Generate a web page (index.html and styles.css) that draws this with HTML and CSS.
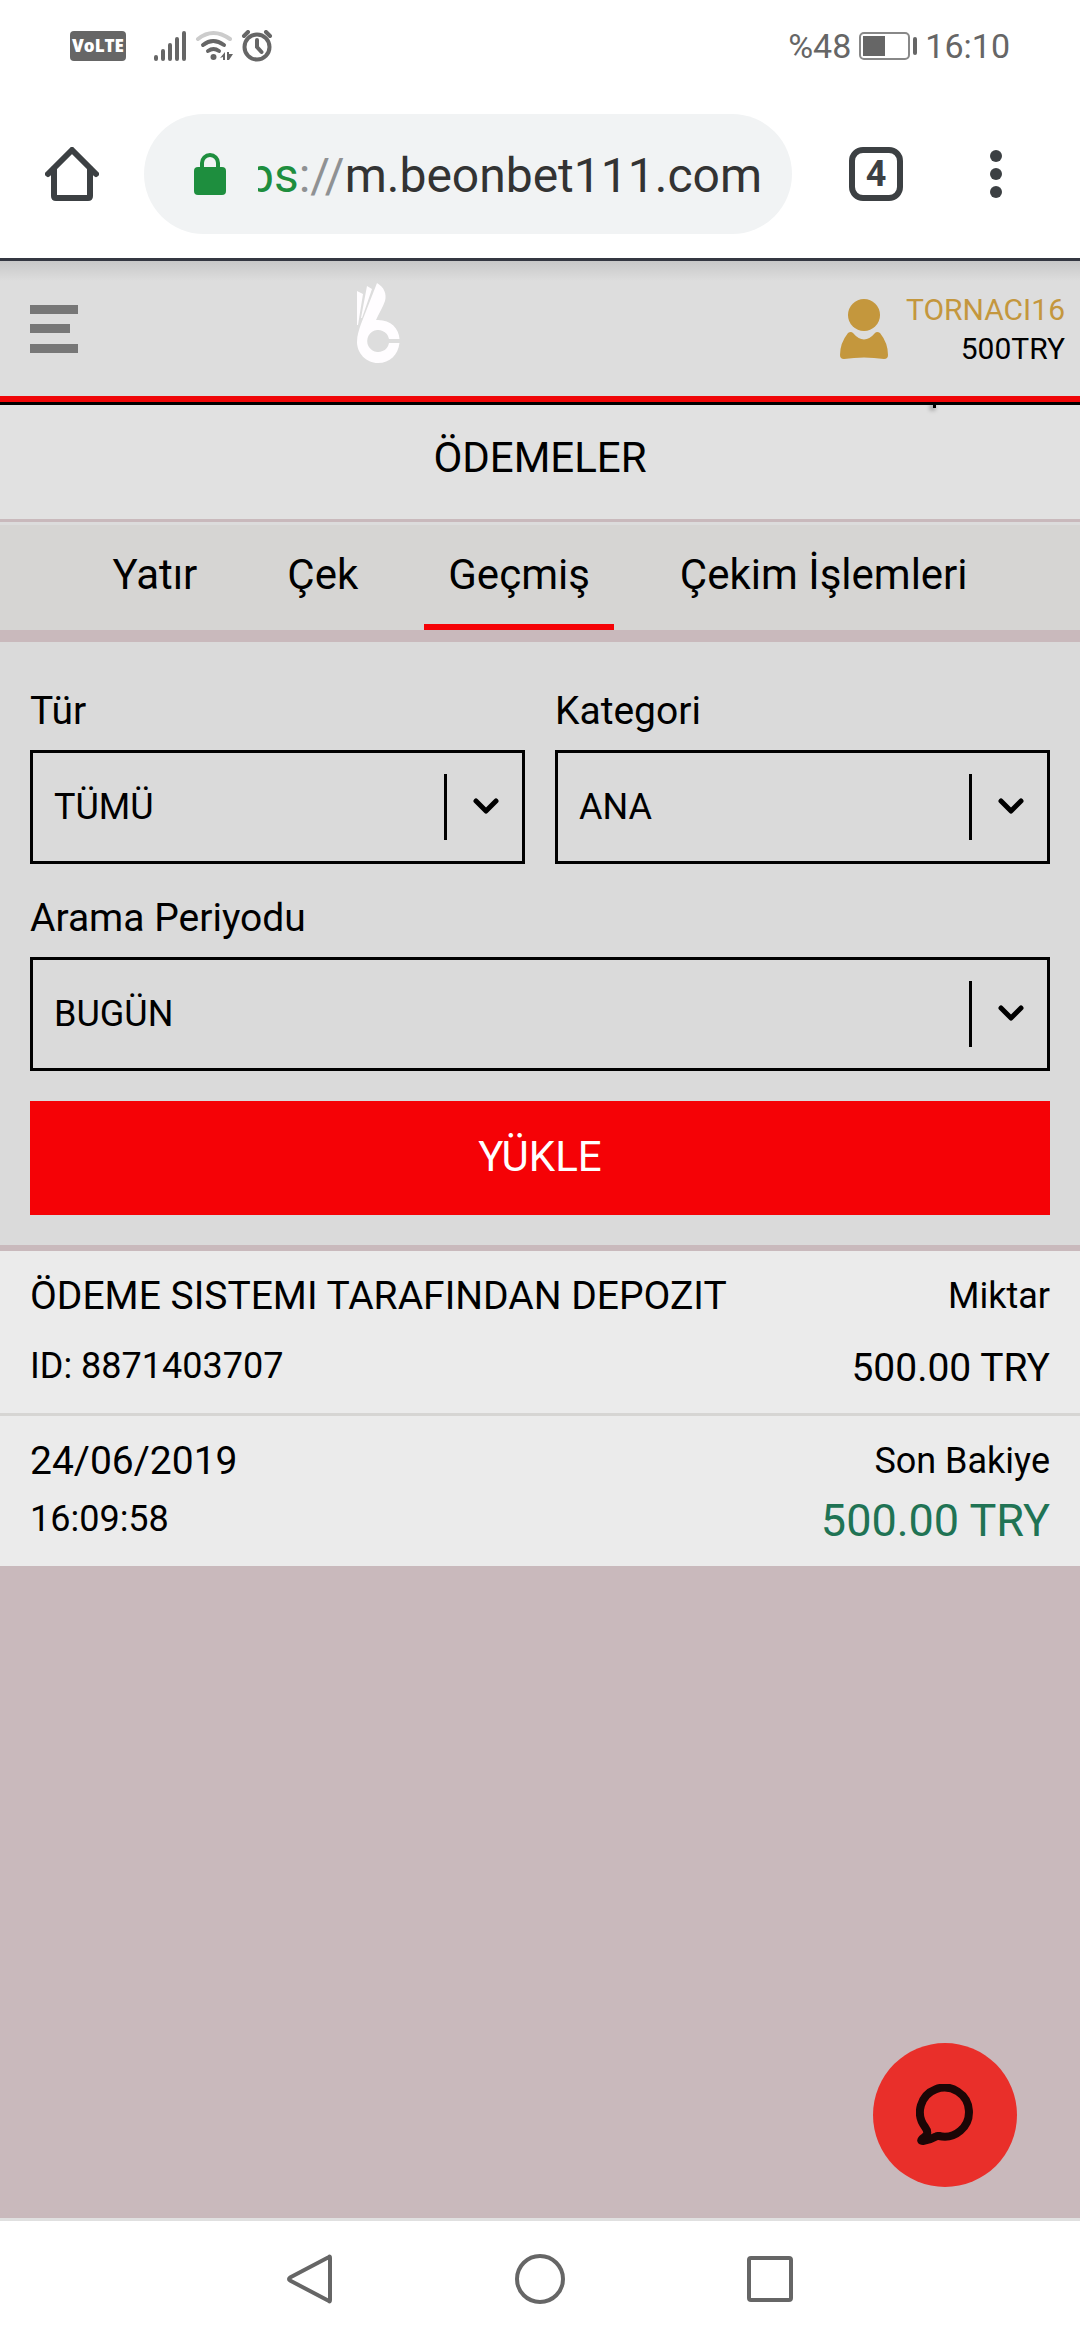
FILE: index.html
```html
<!DOCTYPE html>
<html lang="tr">
<head>
<meta charset="utf-8">
<meta name="viewport" content="width=device-width, initial-scale=1">
<title>Ödemeler</title>
<link rel="stylesheet" href="styles.css">
</head>
<body>
<div class="screen">
  <div class="status">
    <div class="status-left">
      <span class="volte">VoLTE</span>
      <svg class="signal" width="34" height="32" viewBox="0 0 34 32" stroke="#666" stroke-width="4" stroke-linecap="round"><path d="M3 27v2M10 21v8M17 15v14M24 9v20M31 3v26"/></svg>
      <svg class="wifi" width="38" height="32" viewBox="0 0 38 32" fill="none" stroke-linecap="round" stroke-width="4"><path d="M3 9q15-12 32 0" stroke="#ccc"/><path d="M8 15q10-8 21 0M13 21q5.500-4 11 0" stroke="#666"/><circle cx="18.500" cy="27" r="3" fill="#666" stroke="none"/><path d="M25 28l5-6v8h-2v-3zM32 22h2v2l4 0-4 6h-2z" fill="#666" stroke="none"/></svg>
      <svg class="alarm" width="32" height="32" viewBox="0 0 32 32" fill="none" stroke="#666" stroke-linecap="round" stroke-width="4"><circle cx="16" cy="17" r="12.500"/><path d="M16 10v7l4.500 5M3 6l4-4M29 6l-4-4"/></svg>
    </div>
    <div class="status-right">
      <span>%48</span>
      <svg class="battery" width="58" height="28" viewBox="0 0 58 28"><rect x="1" y="1" width="49" height="26" rx="4" fill="none" stroke="#888" stroke-width="2"/><path fill="#666" d="M4 4h22v20H4z"/><rect x="54" y="5" width="4" height="18" rx="2" fill="#666"/></svg>
      <span>16:10</span>
    </div>
  </div>

  <div class="browser">
    <button class="icon-button" aria-label="Ana sayfa">
      <svg width="54" height="54" viewBox="0 0 54 54" fill="none" stroke="#3c4043" stroke-width="6" stroke-linejoin="round" stroke-linecap="round"><path d="M3 27L27 3l24 24"/><path d="M9 22v27q0 2 2 2h32q2 0 2-2V22"/></svg>
    </button>
    <button class="address">
      <svg width="32" height="42" viewBox="0 0 32 42"><rect y="14" width="32" height="28" rx="4" fill="#1e8e3e"/><path d="M8 16v-6a8 8 0 0 1 16 0v6" fill="none" stroke="#1e8e3e" stroke-width="4"/></svg>
      <span class="url"><span class="url-text"><span class="secure">ps</span><span class="slashes">://</span>m.beonbet111.com</span></span>
    </button>
    <button class="tab-count">4</button>
    <button class="more" aria-label="Diğer">
      <svg width="12" height="48" viewBox="0 0 12 48" fill="#3c4043"><circle cx="6" cy="6" r="6"/><circle cx="6" cy="24" r="6"/><circle cx="6" cy="42" r="6"/></svg>
    </button>
  </div>

  <header class="header">
    <button class="icon-button" aria-label="Menü">
      <svg width="48" height="48" viewBox="0 0 48 48" fill="#777"><path d="M0 0h48v9H0zM0 19h40v9H0zM0 39h48v9H0z"/></svg>
    </button>
    <a class="logo" href="#" aria-label="Beonbet">
      <svg width="43" height="80" viewBox="0 0 43 80" fill="#fffdff"><path d="M0 8l6 3L1 42H0zM10 3l5 3L5 35H4z"/><path d="M20 0C27 4 30 11 28 18C26 24 22 30 19 37C33 36 42 45 42.500 56H32A11 11 0 1 0 32 60H42.500C41 72 33 80 21 80C9 80 0 70 0 59C0 52 2 47 4 41z"/></svg>
    </a>
    <a class="account" href="#">
      <svg width="48" height="60" viewBox="0 0 48 60" fill="#c4973d"><circle cx="24" cy="16" r="16"/><path d="M8 34q3-2 5 0q11 13 22 0q2-2 5 0q8 10 8 22q0 4-4 4q-20-3-40 0q-4 0-4-4q0-12 8-22z"/></svg>
      <span class="account-text"><span class="user">TORNACI16</span><span>500TRY</span></span>
    </a>
  </header>

  <main class="main">
    <h1 class="title">ÖDEMELER</h1>
    <nav class="tabs">
      <a class="tab" href="#">Yatır</a>
      <a class="tab" href="#">Çek</a>
      <a class="tab active" href="#" aria-current="page">Geçmiş</a>
      <a class="tab" href="#">Çekim İşlemleri</a>
    </nav>

    <form class="filter">
      <div class="field">
        <label for="type">Tür</label>
        <div class="select"><select id="type"><option>TÜMÜ</option></select>
          <svg class="chevron" width="26" height="16" viewBox="0 0 26 16" fill="none" stroke="#000" stroke-width="5" stroke-linecap="round" stroke-linejoin="round"><path d="M3 3l10 10L23 3"/></svg></div>
      </div>
      <div class="field">
        <label for="category">Kategori</label>
        <div class="select"><select id="category"><option>ANA</option></select>
          <svg class="chevron" width="26" height="16" viewBox="0 0 26 16" fill="none" stroke="#000" stroke-width="5" stroke-linecap="round" stroke-linejoin="round"><path d="M3 3l10 10L23 3"/></svg></div>
      </div>
      <div class="field wide">
        <label for="period">Arama Periyodu</label>
        <div class="select"><select id="period"><option>BUGÜN</option></select>
          <svg class="chevron" width="26" height="16" viewBox="0 0 26 16" fill="none" stroke="#000" stroke-width="5" stroke-linecap="round" stroke-linejoin="round"><path d="M3 3l10 10L23 3"/></svg></div>
      </div>
      <button class="submit wide" type="button">YÜKLE</button>
    </form>

    <section class="result">
      <div class="row roomy">
        <div class="col"><span class="strong">ÖDEME SISTEMI TARAFINDAN DEPOZIT</span><span class="small">ID: 8871403707</span></div>
        <div class="col end"><span>Miktar</span><span class="strong">500.00 TRY</span></div>
      </div>
      <div class="row">
        <div class="col"><span class="strong">24/06/2019</span><span class="small">16:09:58</span></div>
        <div class="col end"><span>Son Bakiye</span><span class="balance">500.00 TRY</span></div>
      </div>
    </section>
    <button class="chat" aria-label="Canlı destek">
      <svg width="58" height="62" viewBox="0 0 58 62" fill="none" stroke="#1c0606" stroke-width="8" stroke-linecap="round" stroke-linejoin="round"><path d="M23 52A24.500 24.500 0 1 0 9 43Q12 47 11 50Q10 52 6 55Q4 57 7 57Q14 56 20 52.500Q21.500 51.500 24 52.200"/></svg>
    </button>
  </main>

  <nav class="system">
    <button class="icon-button" aria-label="Geri"><svg width="50" height="50" viewBox="0 0 50 50" fill="none" stroke="#666" stroke-width="4" stroke-linejoin="round"><path d="M44 3q1-1 1 1v42q0 2-1 1L5 26.500q-2-1.500 0-3z"/></svg></button>
    <button class="icon-button" aria-label="Ana ekran"><svg width="50" height="50" viewBox="0 0 50 50" fill="none" stroke="#666" stroke-width="4"><circle cx="25" cy="25" r="23"/></svg></button>
    <button class="icon-button" aria-label="Son uygulamalar"><svg width="50" height="50" viewBox="0 0 50 50" fill="none" stroke="#666" stroke-width="4"><rect x="4" y="4" width="42" height="42" rx="2"/></svg></button>
  </nav>
</div>
</body>
</html>
```
FILE: styles.css
```css
* { box-sizing: border-box; }
body { margin: 0; background: #c9b9bc; font-family: Roboto, "Noto Sans", sans-serif; font-size: 36px; color: #000; }
button, select { margin: 0; padding: 0; border: 0; background: none; font: inherit; color: inherit; cursor: pointer; }
a { color: inherit; text-decoration: none; }
svg { display: block; flex: none; }
.screen { display: flex; flex-direction: column; min-height: 100vh; }
.icon-button { display: flex; }

.status { display: flex; justify-content: space-between; align-items: center; height: 92px; padding: 0 70px; background: #fff; color: #666; font-size: 34px; }
.status-left, .status-right { display: flex; align-items: center; gap: 8px; }
.volte { width: 56px; height: 30px; margin-right: 19px; border-radius: 4px; background: #666; color: #fff; font: 800 17px/30px "Open Sans", sans-serif; text-align: center; }

.browser { display: flex; align-items: center; padding: 22px 48px 24px 45px; background: #fff; border-bottom: 3px solid #343741; }
.address { display: flex; align-items: center; gap: 32px; flex: 1; min-width: 0; height: 120px; margin: 0 57px 0 45px; padding: 0 30px 0 50px; border-radius: 60px; background: #f1f3f4; }
.url { display: flex; flex: 1; min-width: 0; justify-content: flex-end; padding-top: 4px; overflow: hidden; }
.url-text { color: #333; font-size: 48px; line-height: 60px; white-space: nowrap; }
.secure { color: #1e8e3e; }
.slashes { color: #8f9193; }
.tab-count { width: 54px; height: 54px; border: 6px solid #3c4043; border-radius: 14px; color: #3c4043; font-weight: 700; font-size: 36px; line-height: 42px; }
.more { display: flex; justify-content: center; width: 72px; margin-left: 57px; }

.header { display: flex; align-items: center; min-height: 144px; padding: 0 15px 6px 30px; border-bottom: 3px solid #000; background: linear-gradient(#c8c8c8, #ddd 20px); box-shadow: inset 0 -6px #f00608; position: relative; }
.header::after { content: ""; position: absolute; top: 144px; right: 144px; width: 3px; height: 3px; background: #000; box-shadow: -2px 1px 5px #000; }
.logo { width: 43px; margin: 0 0 12px 27%; }
.account { display: flex; align-items: center; gap: 18px; margin-left: auto; }
.account-text { display: flex; flex-direction: column; align-items: flex-end; font-size: 30px; line-height: 39px; }
.user { color: #c4973d; }

.main { display: flex; flex-direction: column; flex: 1; }
.title { margin: 0 0 3px; padding: 27px 0 35px; background: #e1e1e1; text-align: center; font-weight: 400; font-size: 42px; line-height: 52px; }
.tabs { display: flex; justify-content: center; gap: 42px; border-top: 3px solid #dcdcdc; background: #d6d5d3; font-size: 42px; line-height: 52px; }
.tab { padding: 24px 24px 23px; border-bottom: 6px solid transparent; }
.active { border-color: #f50206; }

.filter { display: grid; grid-template-columns: 1fr 1fr; gap: 30px; margin: 12px 0 6px; padding: 45px 30px 30px; background: #dadada; }
.wide { grid-column: 1 / -1; }
.field { display: flex; flex-direction: column; gap: 15px; font-size: 39px; line-height: 48px; }
.select { position: relative; font-size: 36px; }
.select select { display: block; width: 100%; height: 114px; padding: 0 96px 0 21px; border: 3px solid #000; border-radius: 0; appearance: none; }
.select::after { content: ""; position: absolute; top: 24px; bottom: 24px; right: 78px; width: 3px; background: #000; }
.chevron { position: absolute; top: 48px; right: 26px; pointer-events: none; }
.submit { height: 114px; padding-bottom: 4px; background: #f50206; color: #fff; font-size: 42px; }

.result { background: #ebebeb; }
.row { display: flex; justify-content: space-between; padding: 19px 30px; line-height: 52px; }
.roomy { border-bottom: 3px solid #d6d5d3; }
.col { display: flex; flex-direction: column; gap: 8px; }
.roomy .col { gap: 20px; }
.end { align-items: flex-end; }
.small { line-height: 48px; }
.strong { font-size: 39px; }
.balance { color: #207354; font-size: 45px; }

.chat { display: flex; align-items: center; justify-content: center; width: 144px; height: 144px; margin: auto 63px 31px auto; border-radius: 50%; background: #e92f2a; }
.system { display: flex; justify-content: center; align-items: center; gap: 180px; height: 122px; padding-bottom: 4px; border-top: 3px solid #e0e0e0; background: #fff; }
```
